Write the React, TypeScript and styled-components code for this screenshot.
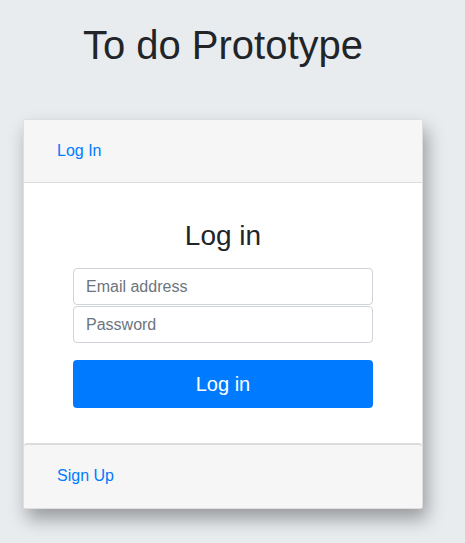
import React from "react";
import styled, { createGlobalStyle } from "styled-components";

const Global = createGlobalStyle`
  html, body { margin: 0; padding: 0; background: #e9ecef; }
  body { font-family: "Liberation Sans", Arial, sans-serif; color: #212529; font-size: 16px; }
  * { box-sizing: border-box; }
`;

const Page = styled.div`
  width: 446px;
  min-height: 543px;
  padding-top: 21px;
  padding-bottom: 35px;
  display: flex;
  flex-direction: column;
  align-items: center;
`;

const Title = styled.h1`
  margin: 0 0 50px;
  font-size: 40px;
  font-weight: 400;
  line-height: 48px;
  color: #212529;
`;

const Card = styled.div`
  width: 400px;
  background: #fff;
  border: 1px solid rgba(0, 0, 0, 0.125);
  border-radius: 3px;
  box-shadow: 4px 10px 18px rgba(0, 0, 0, 0.35);
  display: flex;
  flex-direction: column;
`;

const Bar = styled.div<{ $top?: boolean }>`
  background: #f6f6f6;
  padding: 19px 33px;
  line-height: 24px;
  ${(p) => (p.$top ? "border-bottom: 1px solid #dcdcdc;" : "border-top: 2px solid #dcdcdc; border-radius: 3px 3px 0 0; padding-top: 19px; padding-bottom: 20px;")}
`;

const Link = styled.a`
  color: #007bff;
  text-decoration: none;
  font-size: 16px;
`;

const Body = styled.form`
  padding: 36px 49px 35px;
  display: flex;
  flex-direction: column;
`;

const Heading = styled.h3`
  margin: 0 0 15px;
  font-size: 28px;
  font-weight: 400;
  line-height: 34px;
  text-align: center;
  color: #212529;
`;

const Input = styled.input`
  height: 37px;
  margin-bottom: 1px;
  padding: 6px 12px;
  border: 1px solid #ced4da;
  border-radius: 4px;
  font-family: inherit;
  font-size: 16px;
  color: #495057;
  &::placeholder { color: #6c757d; }
`;

const Button = styled.button`
  margin-top: 16px;
  height: 48px;
  border: none;
  border-radius: 4px;
  background: #007bff;
  color: #fff;
  font-family: inherit;
  font-size: 20px;
`;

export default function App() {
  return (
    <>
      <Global />
      <Page>
        <Title>To do Prototype</Title>
        <Card>
          <Bar $top>
            <Link href="#">Log In</Link>
          </Bar>
          <Body onSubmit={(e) => e.preventDefault()}>
            <Heading>Log in</Heading>
            <Input type="email" placeholder="Email address" />
            <Input type="password" placeholder="Password" />
            <Button type="submit">Log in</Button>
          </Body>
          <Bar>
            <Link href="#">Sign Up</Link>
          </Bar>
        </Card>
      </Page>
    </>
  );
}
